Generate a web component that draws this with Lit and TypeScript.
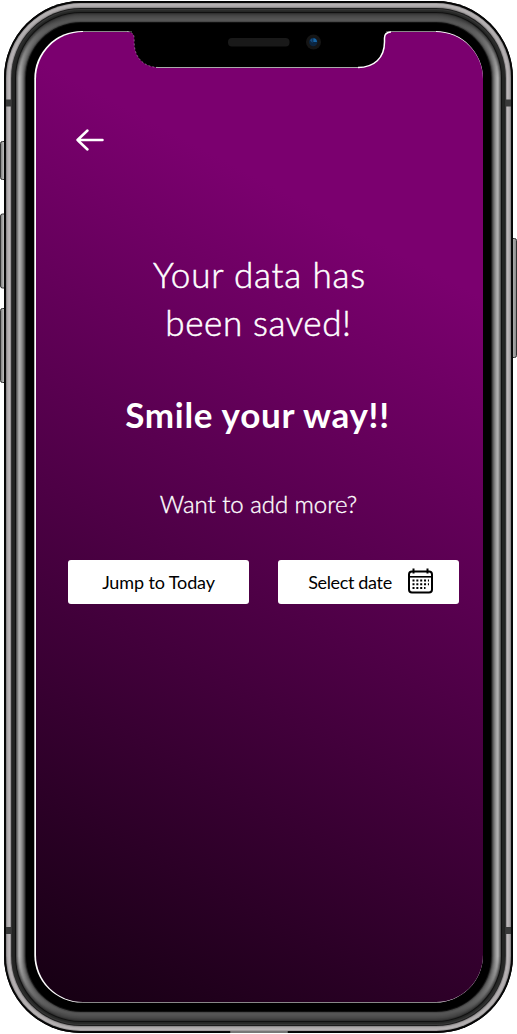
import { LitElement, html, svg, css } from "lit";
import { customElement } from "lit/decorators.js";

/* Colours of the metal bezel, one per concentric pixel ring: [sides, top and bottom] */
const RINGS: [string, string][] = [
  ["#050505", "#050505"],
  ["#0a0a0a", "#080808"],
  ["#8c898b", "#a09d9e"],
  ["#aaa6a8", "#b7b3b4"],
  ["#b5b0b2", "#b2aeaf"],
  ["#bbb6b8", "#aaa6a7"],
  ["#999698", "#8d8a8b"],
  ["#343434", "#1c1c1c"],
  ["#222322", "#383838"],
  ["#242524", "#2a2b2a"],
  ["#222322", "#252625"],
  ["#101010", "#101010"],
  ["#555555", "#303030"],
  ["#7a7a7a", "#3c3c3c"],
  ["#9e9e9e", "#444444"],
  ["#adadad", "#4a4a4a"],
  ["#a3a3a3", "#4e4e4e"],
  ["#929292", "#525252"],
  ["#7d7d7d", "#555555"],
  ["#646464", "#555555"],
  ["#454545", "#484848"],
  ["#1c1c1c", "#101010"],
];

@customElement("phone-frame")
export class PhoneFrame extends LitElement {
  static styles = css`
    :host { display: block; width: 517px; height: 1034px; }
    svg { display: block; }
  `;
  render() {
    return html`<svg width="517" height="1034" viewBox="0 0 517 1034">
      <defs>
        <linearGradient id="key" x1="0" x2="1" y1="0" y2="0">
          <stop offset="0" stop-color="#777" /><stop offset=".4" stop-color="#bbb" /><stop offset="1" stop-color="#888" />
        </linearGradient>
        ${RINGS.map(
          ([side, cap], i) => svg`<linearGradient id=${"r" + i} gradientUnits="userSpaceOnUse" x1="0" y1="0" x2="0" y2="1034">
            <stop offset=".02" stop-color=${cap} /><stop offset=".075" stop-color=${side} />
            <stop offset=".925" stop-color=${side} /><stop offset=".98" stop-color=${cap} />
          </linearGradient>`
        )}
      </defs>
      <g fill="url(#key)" stroke="#333" stroke-width="1">
        <rect x="0.5" y="141.5" width="8" height="38" rx="2" />
        <rect x="0.5" y="214" width="8" height="74" rx="2" />
        <rect x="0.5" y="308.5" width="8" height="74" rx="2" />
        <rect x="508" y="238.5" width="8.5" height="119" rx="2" />
      </g>
      <rect x="4" y="1" width="509" height="1032" rx="77" fill="#000" />
      ${RINGS.map(
        ([, _], i) => svg`<rect x=${4 + i} y=${1 + i} width=${509 - 2 * i} height=${1032 - 2 * i}
          rx=${77 - i} fill=${`url(#r${i})`} />`
      )}
      <rect x="26" y="23" width="465" height="988" rx="55" fill="#000" />
      <g fill="#393939">
        <rect x="6" y="99.5" width="5" height="7" /><rect x="506" y="99.5" width="5" height="7" />
        <rect x="6" y="927" width="5" height="7" /><rect x="506" y="927" width="5" height="7" />
      </g>
      <rect x="230" y="1031" width="58" height="2" rx="1" fill="#777" />
      <rect x="34.300" y="31" width="448.700" height="971.500" rx="47.500" fill="#fff" />
      <path d="M83 31.500H436M83 1002.500H436" stroke="#888" />
    </svg>`;
  }
}

@customElement("phone-notch")
export class PhoneNotch extends LitElement {
  static styles = css`
    :host { display: block; width: 264px; height: 38px; }
    svg { display: block; }
  `;
  render() {
    return html`<svg width="264" height="38" viewBox="127 31 264 38">
      <path d="M127 31.500Q134 32 134.200 38V42C134.200 58 144 67.500 160 67.500H358C374 67.500 384.500 58 384.500 42V38Q384.500 31.500 391 31.500" fill="#000" stroke="none" />
      <path d="M127 31.500Q134 32 134.200 38V42C134.200 58 144 67.500 160 67.500" fill="none" stroke="#fff" stroke-width="1" stroke-dasharray="2 2" opacity=".35" />
      <path d="M156 67.500H362" stroke="#aaa" stroke-width="1" />
      <path d="M358 67.500C374 67.500 384.500 58 384.500 42V38Q384.500 32.200 391 32" fill="none" stroke="#fff" stroke-width="1.500" />
      <path d="M132 31.500H386" stroke="#000" stroke-width="1" />
      <rect x="228" y="38" width="61.500" height="8.500" rx="4" fill="#191919" />
      <circle cx="313.500" cy="42" r="7.500" fill="#151515" />
      <circle cx="313.300" cy="42" r="4.200" fill="#0c2540" />
      <path d="M313.300 42V38.200A4 4 0 0 1 317 42Z" fill="#1765a5" />
      <path d="M310 40.500A4 4 0 0 1 312.500 38.200V43Z" fill="#174a7b" />
    </svg>`;
  }
}

@customElement("app-root")
export class AppRoot extends LitElement {
  static styles = css`
    :host {
      display: grid;
      width: 517px;
      height: 1034px;
      overflow: hidden;
      background: #fff;
      font-family: Lato, "Open Sans", sans-serif;
      color: #fff;
    }
    phone-frame, .screen { grid-area: 1 / 1; }
    .screen {
      position: relative;
      box-sizing: border-box;
      margin: 32px 34px 32px 36px;
      width: 447px;
      height: 970px;
      border-radius: 47px;
      background: linear-gradient(208deg, #7b006f 22%, #150012 100%);
      display: flex;
      flex-direction: column;
      padding: 96px 24px 0 32px;
    }
    phone-notch { position: absolute; left: 91px; top: -1px; }
    .back {
      width: 44px;
      height: 24px;
      padding: 0;
      border: 0;
      background: none;
    }
    .back svg { display: block; }
    h1, h2, p { margin: 0; text-align: center; white-space: nowrap; }
    h1 { margin-top: 98px; padding-right: 9px; font-weight: 300; font-size: 35px; line-height: 48px; -webkit-text-stroke: 0.5px #fff; }
    .l1 { letter-spacing: 0.8px; margin-right: -0.8px; }
    .l2 { letter-spacing: 0.6px; margin-right: 1px; }
    h2 { margin-top: 44px; padding-right: 12px; font-weight: 700; font-size: 35px; line-height: 48px; letter-spacing: 0.7px; }
    p { margin-top: 50px; padding-right: 10px; font-weight: 300; font-size: 24px; line-height: 32px; letter-spacing: -0.05px; -webkit-text-stroke: 0.35px #fff; }
    .actions { display: flex; gap: 29px; margin-top: 40px; }
    .action {
      display: flex;
      align-items: center;
      justify-content: center;
      width: 181px;
      height: 44px;
      padding: 0 0 1px;
      border: 0;
      border-radius: 3px;
      background: #fff;
      color: #000;
      font: 400 18px/24px Lato, sans-serif;
      letter-spacing: -0.12px;
      white-space: nowrap;
      box-sizing: border-box;
    }
    .action.pick { gap: 16px; letter-spacing: -0.35px; padding-left: 4px; }
    .cal { display: block; margin-top: -1px; }
  `;

  render() {
    return html`
      <phone-frame></phone-frame>
      <main class="screen">
        <phone-notch></phone-notch>
        <button class="back" aria-label="Back">
          <svg width="44" height="24" viewBox="0 0 44 24" fill="none" stroke="#fff" stroke-width="2.500" stroke-linecap="round" stroke-linejoin="round">
            <path d="M34.500 12H9.500M19.500 2.500L9.500 12L19.500 21.500" />
          </svg>
        </button>
        <h1><span class="l1">Your data has</span><br /><span class="l2">been saved!</span></h1>
        <h2>Smile your way!!</h2>
        <p>Want to add more?</p>
        <div class="actions">
          <button class="action">Jump to Today</button>
          <button class="action pick">
            <span>Select date</span>
            <svg class="cal" width="25" height="26" viewBox="0 0 25 26">
              <rect x="1" y="3.500" width="23" height="21" rx="3" fill="none" stroke="#000" stroke-width="2" />
              <path d="M1 8.800H24" stroke="#000" stroke-width="1.600" />
              <path d="M5.500 .5V5.500M19.500 .5V5.500" stroke="#000" stroke-width="2" />
              <path d="M4.500 12.500H21M4.500 16.300H21M4.500 20.100H17.500" stroke="#000" stroke-width="2" stroke-dasharray="2 1.850" />
            </svg>
          </button>
        </div>
      </main>
    `;
  }
}
